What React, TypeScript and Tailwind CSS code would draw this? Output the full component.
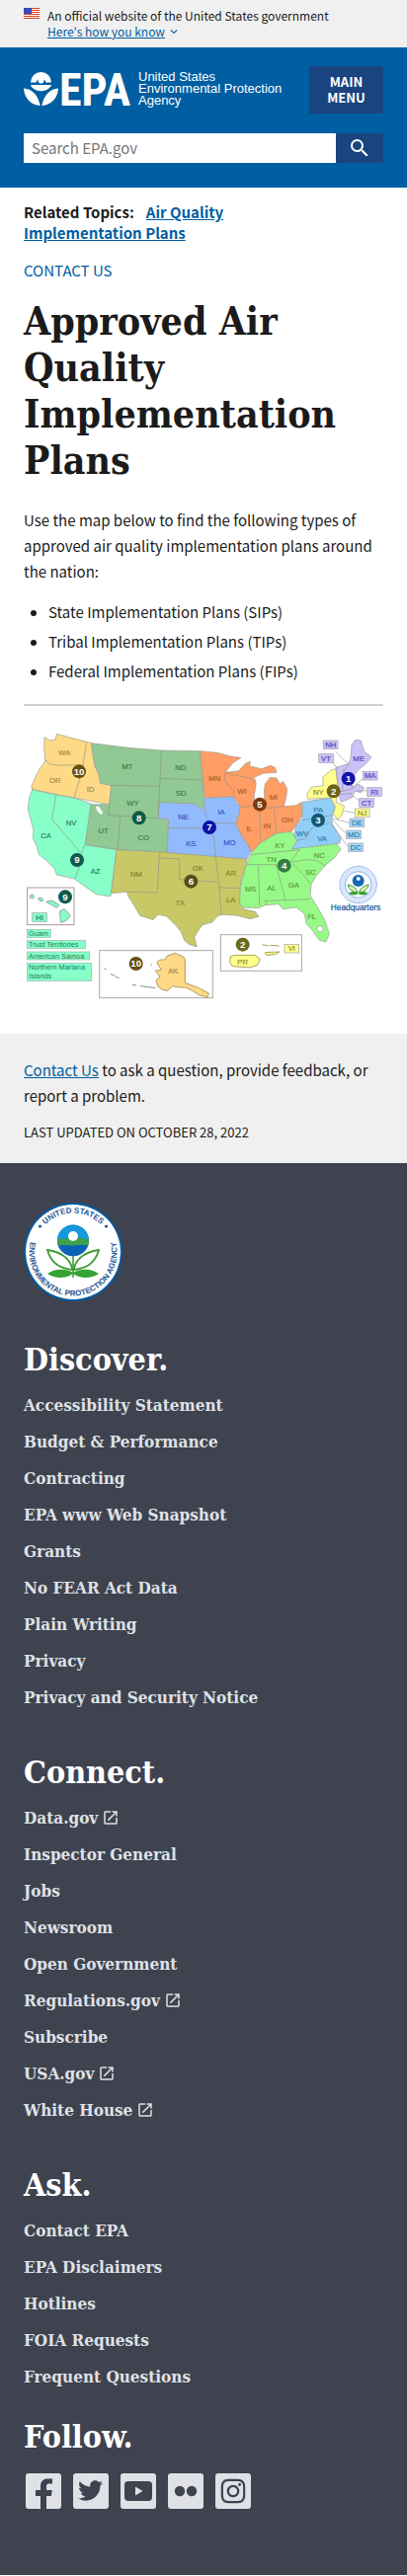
import React from "react";
import { FaTwitter, FaInstagram } from "react-icons/fa";
import { MdSearch, MdExpandMore, MdLaunch } from "react-icons/md";

const sans = "font-['Noto_Sans_CJK_SC',sans-serif]";
const serif = "font-['DejaVu_Serif_Condensed','DejaVu_Serif',serif]";

type FooterLink = { label: string; external?: boolean };

const discover: FooterLink[] = [
  { label: "Accessibility Statement" },
  { label: "Budget & Performance" },
  { label: "Contracting" },
  { label: "EPA www Web Snapshot" },
  { label: "Grants" },
  { label: "No FEAR Act Data" },
  { label: "Plain Writing" },
  { label: "Privacy" },
  { label: "Privacy and Security Notice" },
];

const connect: FooterLink[] = [
  { label: "Data.gov", external: true },
  { label: "Inspector General" },
  { label: "Jobs" },
  { label: "Newsroom" },
  { label: "Open Government" },
  { label: "Regulations.gov", external: true },
  { label: "Subscribe" },
  { label: "USA.gov", external: true },
  { label: "White House", external: true },
];

const ask: FooterLink[] = [
  { label: "Contact EPA" },
  { label: "EPA Disclaimers" },
  { label: "Hotlines" },
  { label: "FOIA Requests" },
  { label: "Frequent Questions" },
];

function Flag() {
  return (
    <svg viewBox="0 0 16 11" className="mt-2 h-[11px] w-4 shrink-0" aria-hidden="true">
      <rect width="16" height="11" fill="#fff" />
      {[0, 2, 4, 6, 8, 10].map((y) => (
        <rect key={y} y={y} width="16" height="1" fill="#db3e1f" />
      ))}
      <rect width="8" height="6" fill="#1e33b1" />
      {[1, 3, 5].map((y) =>
        [1, 3, 5, 7].map((x) => (
          <circle key={`${x}-${y}`} cx={x - (y === 3 ? 0 : 0.4)} cy={y} r="0.4" fill="#fff" />
        )),
      )}
    </svg>
  );
}

function Logo() {
  return (
    <svg viewBox="0 0 114 36" className="h-9 w-[114px] shrink-0 overflow-visible" role="img" aria-label="EPA">
      <g fill="#fff">
        <path d="M7 11.500a10.500 10.500 0 0 1 21 0h-5.500a5.200 5.200 0 0 0-10 0z" />
        <circle cx="17.500" cy="9.500" r="3" />
        <path d="M7 14h21c-.8 3-5 6.200-10.500 6.200s-9.700-3.200-10.500-6.200z" />
        <path d="M0 17.500c8 .5 14.500 6 16.600 17.500C8 34.500.5 28 0 17.500z" />
        <path d="M35 17.500c-8 .5-14.500 6-16.600 17.500C27 34.500 34.500 28 35 17.500z" />
      </g>
      <text x="36" y="35" fill="#fff" fontSize="46" fontWeight="700" fontFamily="'Roboto Condensed','Liberation Sans Narrow',Roboto,sans-serif">
        EPA
      </text>
    </svg>
  );
}

function Seal({ className }: { className: string }) {
  return (
    <svg viewBox="0 0 100 100" className={className} role="img" aria-label="EPA seal">
      <defs>
        <path id="seal-top" d="M10.500 50a39.500 39.500 0 0 1 79 0" />
        <path id="seal-ring" d="M19.800 17.500a44.400 44.400 0 1 0 60.400 0" />
      </defs>
      <circle cx="50" cy="50" r="50" fill="#00599f" />
      <circle cx="50" cy="50" r="48" fill="#fff" />
      <g fill="#1d5792" fontFamily="Liberation Sans" fontSize="8" fontWeight="700">
        <text textAnchor="middle">
          <textPath href="#seal-top" startOffset="50%">
            UNITED STATES
          </textPath>
        </text>
        <text textAnchor="middle">
          <textPath href="#seal-ring" startOffset="50%">
            ENVIRONMENTAL PROTECTION AGENCY
          </textPath>
        </text>
        <circle cx="16.500" cy="24" r="1.600" />
        <circle cx="83.500" cy="24" r="1.600" />
      </g>
      <circle cx="50" cy="38.500" r="16" fill="#0b63b5" />
      <path d="M34.100 37a16 16 0 0 1 31.800 0z" fill="#1499da" />
      <path d="M34 37.500c5-2 10 0 16-1.500s11 0 16 1.500c.2 2.500-.2 4.500-.8 6-6-1.500-10 0-15 0s-10-1.500-15.400.3c-.8-2-1-4-.8-6.300z" fill="#3fa04c" />
      <circle cx="50" cy="34" r="5" fill="#fff" />
      <g fill="#fff" stroke="#3f9c35" strokeWidth="1.800">
        <path d="M49.500 68c-12-1-22-7-25.500-20 13 2 23 8 25.500 20z" />
        <path d="M50.500 68c12-1 22-7 25.500-20-13 2-23 8-25.500 20z" />
      </g>
      <path d="M50 72c-7 5-18 5.500-26 0 7-5.500 19-5.500 26-1 7-4.500 19-4.500 26 1-8 5.500-19 5-26 0z" fill="#35a333" />
      <path d="M50 54v22" stroke="#3f9c35" strokeWidth="1.600" />
    </svg>
  );
}

const regionShapes: { fill: string; d: string }[] = [
  { fill: "#ffda86", d: "M75 38L90 47 108 45 112 28 203 52 218 56 222 90 228 125 240 150 245 178 278 184 272 242 165 222 38 197 36 185 48 158 60 135 78 110 74 70Z" },
  { fill: "#91c893", d: "M218 56L330 70 430 78 548 80 552 135 558 175 560 258 530 240 424 236 420 284 452 288 448 388 298 380 198 365 216 242 272 242 278 184 245 178 240 150 228 125 222 90Z" },
  { fill: "#87ffc9", d: "M38 197L110 213 165 222 216 240 198 365 294 380 276 522 232 515 165 468 112 456 104 436 84 415 58 395 52 370 40 345 42 320 34 290 25 258 28 225Z" },
  { fill: "#c9c866", d: "M294 380L448 388 595 400 690 408 684 440 672 470 668 545 680 560 715 568 726 583 700 590 660 580 615 577 600 582 585 600 555 608 545 622 530 645 538 675 515 668 500 655 490 630 470 605 445 582 420 577 405 593 365 580 345 545 330 522 326 508 278 512Z" },
  { fill: "#91bbfc", d: "M424 236L530 240 560 262 562 222 650 218 658 238 670 250 665 275 655 300 675 340 690 360 702 385 690 408 595 400 448 388 452 288 420 284Z" },
  { fill: "#ff9d64", d: "M548 80L600 85 640 96 672 100 645 118 625 145 665 140 685 118 700 112 698 126 735 134 760 124 775 130 780 145 740 148 712 160 718 178 712 215 712 245 728 248 745 250 742 205 745 180 760 160 780 162 790 180 800 172 812 195 810 215 802 248 840 245 855 235 858 275 840 305 825 325 780 330 730 360 705 388 690 360 675 340 657 300 665 275 670 250 650 218 562 222 554 150Z" },
  { fill: "#97fa87", d: "M705 388L730 360 780 330 825 325 842 352 830 375 960 360 976 378 955 405 930 425 900 460 885 485 882 520 895 540 925 590 940 635 930 660 910 655 885 620 870 605 865 575 840 555 800 560 785 545 745 548 725 557 675 555 668 545 670 490 690 420Z" },
  { fill: "#91cff8", d: "M858 235L945 222 958 248 950 275 948 300 975 345 972 360 825 378 842 355 832 335 840 305 858 285Z" },
  { fill: "#ffff8c", d: "M875 226L872 212 885 190 922 185 920 160 945 138 960 134 968 205 960 235 986 247 978 275 965 288 952 270 958 250 945 222Z" },
  { fill: "#cbc2f7", d: "M960 130L1000 118 1005 100 1008 60 1020 46 1036 48 1046 82 1068 98 1052 118 1030 135 1012 158 1010 192 1028 180 1046 192 1036 206 1018 202 1008 222 975 235 968 200Z" },
];

const borders =
  "M75 106L92 120 125 124 160 122 195 126 M203 52L192 125 182 165 165 222 M278 184L425 187 M430 78L425 187 420 284 M425 163L555 168 M272 242L268 275 420 284 M305 280L298 380 M110 215L98 288 188 392 196 366 M180 390L184 425 168 468 M326 508L418 510 424 388 M424 405L485 408 485 470 600 478 M595 400L604 475 612 577 M606 495L668 497 M452 313L570 315 M560 262L575 298 590 345 595 400 M575 298L655 300 M625 145L622 170 650 200 650 220 M625 145L660 155 700 162 712 178 M670 250L712 246 M728 250L732 330 728 360 M772 250L780 330 M728 255L802 248 M700 395L850 380 825 412 790 425 690 425 M725 430L728 550 M778 425L800 505 806 535 M750 538L745 548 M740 536L880 530 M828 422L860 455 885 485 M825 418L870 410 900 412 928 428 M858 290L948 275 M842 352L870 345 885 315 940 298 M1000 118L985 140 1010 192 M984 135L980 200 M968 205L1010 195 M975 212L1008 208";

const stateLabels: [string, number, number, string][] = [
  ["WA", 136, 92, "#a58a45"], ["OR", 107, 178, "#a58a45"], ["ID", 215, 204, "#a58a45"],
  ["MT", 327, 136, "#4c7a50"], ["ND", 488, 138, "#4c7a50"], ["SD", 490, 215, "#4c7a50"], ["WY", 343, 246, "#4c7a50"], ["UT", 254, 331, "#4c7a50"], ["CO", 376, 350, "#4c7a50"],
  ["CA", 80, 345, "#2f7d62"], ["NV", 156, 306, "#2f7d62"], ["AZ", 230, 452, "#2f7d62"],
  ["NE", 497, 289, "#3a56c8"], ["KS", 520, 368, "#3a56c8"], ["IA", 612, 273, "#3a56c8"], ["MO", 637, 367, "#3a56c8"],
  ["NM", 354, 462, "#87862e"], ["TX", 487, 548, "#87862e"], ["OK", 541, 444, "#87862e"], ["AR", 641, 458, "#87862e"], ["LA", 641, 541, "#87862e"],
  ["MN", 592, 172, "#b0602d"], ["WI", 675, 210, "#b0602d"], ["MI", 771, 228, "#b0602d"], ["IL", 697, 324, "#b0602d"], ["IN", 751, 316, "#b0602d"], ["OH", 812, 298, "#b0602d"],
  ["KY", 790, 374, "#5e9c3d"], ["TN", 764, 418, "#5e9c3d"], ["NC", 910, 404, "#5e9c3d"], ["SC", 883, 455, "#5e9c3d"], ["MS", 701, 508, "#5e9c3d"], ["AL", 765, 504, "#5e9c3d"], ["GA", 832, 496, "#5e9c3d"], ["FL", 887, 592, "#5e9c3d"],
  ["PA", 906, 266, "#3478a8"], ["WV", 858, 339, "#3478a8"], ["VA", 918, 353, "#3478a8"],
  ["NY", 907, 213, "#8c8a30"], ["ME", 1029, 112, "#5646b8"], ["AK", 466, 756, "#a58a45"], ["PR", 677, 728, "#8c8a30"],
];

const boxedLabels: [string, number, number, string, string][] = [
  ["NH", 944, 61, "#cbc2f7", "#5646b8"], ["VT", 930, 102, "#cbc2f7", "#5646b8"], ["MA", 1064, 155, "#cbc2f7", "#5646b8"],
  ["RI", 1077, 204, "#cbc2f7", "#5646b8"], ["CT", 1053, 237, "#cbc2f7", "#5646b8"], ["NJ", 1040, 268, "#ffff8c", "#8c8a30"],
  ["DE", 1024, 298, "#a4d9f8", "#3478a8"], ["MD", 1014, 334, "#a4d9f8", "#3478a8"], ["DC", 1020, 373, "#a4d9f8", "#3478a8"],
  ["VI", 826, 680, "#ffff8c", "#8c8a30"], ["HI", 60, 585, "#87ffc9", "#2f7d62"],
];

const regionDots: [string, number, number, string][] = [
  ["10", 180, 142, "#67500f"], ["8", 362, 283, "#0d5a42"], ["9", 174, 411, "#0f5a4c"], ["7", 576, 312, "#0b12a8"],
  ["5", 729, 242, "#7a3b12"], ["6", 520, 476, "#54501a"], ["4", 803, 428, "#347c40"], ["3", 906, 290, "#0e5a78"],
  ["2", 953, 202, "#6b6214"], ["1", 998, 164, "#160fa8"], ["9", 138, 523, "#0f5a4c"], ["10", 353, 726, "#67500f"], ["2", 677, 668, "#6b6a1c"],
];

const territories: [string, number, number, number][] = [
  ["Guam", 622, 72, 24],
  ["Trust Territories", 656, 178, 24],
  ["American Samoa", 690, 190, 24],
];

function RegionMap() {
  return (
    <svg viewBox="12 0 1092 855" className="block w-full" role="img" aria-label="Map of EPA regions" fontFamily="Liberation Sans">
      <g stroke="#9a9c94" strokeWidth="2" strokeLinejoin="round">
        {regionShapes.map((r) => (
          <path key={r.fill} d={r.d} fill={r.fill} />
        ))}
        <path d={borders} fill="none" stroke="#8d9488" />
        <path d="M230 248l10 0 12 18-4 8-12-10z" fill="#fff" stroke="none" />
        <circle cx="912" cy="620" r="9" fill="#fff" />
        <path d="M960 82L996 118 M950 112L965 135 M1040 165L1010 192 M1055 200L1025 202 M1032 232L1005 212 M1018 268L985 262 M1002 298L952 285 M995 334L950 290 M996 370L945 300" fill="none" />
      </g>

      <g fill="#fff" stroke="#a8979d" strokeWidth="3">
        <rect x="23" y="495" width="142" height="113" />
        <rect x="242" y="686" width="344" height="144" stroke="#aaa" />
        <rect x="610" y="638" width="246" height="110" stroke="#aaa" />
      </g>
      <g fill="#87ffc9" stroke="#8ba89c" strokeWidth="3">
        <path d="M122 566l14-6 18 20-14 16-16 5z" />
        <circle cx="37" cy="522" r="6" />
        <path d="M56 528l10-2 6 8-10 2z M80 538l18-4 22 14-8 8-14-8z" />
      </g>
      <g fill="#ffda86" stroke="#b09a66" strokeWidth="3">
        <path d="M416 722l10-8 14 0 8-12 24-8 26 12 4 8 0 70 20 8 22 8 30 16-4 12-24-6-22-14-22-10-20 0-18-4-14 14-16-2-14-10-6-20 12-10-14-18 18-4-8-12z" />
        <path d="M256 740l6 4M276 758l12 4M288 764l14 6M342 790l12 2M366 794l46 6M398 728l4 2" fill="none" stroke="#8e8e8e" />
      </g>
      <g fill="#ffff8c" stroke="#a8a560" strokeWidth="3">
        <path d="M640 704l14-4 60 0 16 12-8 18-24 8-52-4-8-12z" />
        <path d="M745 692l44-2-14 8-26 2z M736 668l20 4M760 670l28 2" />
      </g>

      {boxedLabels.map(([label, x, y, fill]) => (
        <rect key={label} x={x - 22} y={y - 13} width="44" height="26" fill={fill} stroke="#a3a0b0" strokeWidth="2" />
      ))}
      {boxedLabels.map(([label, x, y, , ink]) => (
        <text key={label} x={x} y={y + 8} fontSize="23" textAnchor="middle" fill={ink} stroke={ink} strokeWidth="0.600">
          {label}
        </text>
      ))}
      {stateLabels.map(([label, x, y, ink]) => (
        <text key={label} x={x} y={y} fontSize="23" textAnchor="middle" fill={ink} stroke={ink} strokeWidth="0.600">
          {label}
        </text>
      ))}
      {regionDots.map(([label, x, y, fill], i) => (
        <g key={i}>
          <circle cx={x} cy={y} r="21" fill={fill} />
          <text x={x} y={y + 10} fontSize="29" fontWeight="700" textAnchor="middle" fill="#fff">
            {label}
          </text>
        </g>
      ))}
      <g fontSize="22">
        {territories.map(([label, y, w, h]) => (
          <g key={label}>
            <rect x="22" y={y} width={w} height={h} fill="#87ffc9" stroke="#93b8a9" strokeWidth="2" />
            <text x="27" y={y + 20} fill="#1f7a5e">
              {label}
            </text>
          </g>
        ))}
        <rect x="22" y="724" width="196" height="54" fill="#87ffc9" stroke="#93b8a9" strokeWidth="2" />
        <text x="27" y="745" fill="#1f7a5e">
          Northern Mariana
        </text>
        <text x="27" y="772" fill="#1f7a5e">
          Islands
        </text>
      </g>

      <g>
        <circle cx="1028" cy="486" r="56" fill="#dbe7fb" stroke="#6c9be8" strokeWidth="3" strokeDasharray="5 3" />
        <circle cx="1028" cy="486" r="40" fill="#fff" stroke="#8fb2ec" strokeWidth="3" />
        <circle cx="1028" cy="474" r="18" fill="#1766b8" />
        <circle cx="1028" cy="468" r="6" fill="#fff" />
        <path d="M1026 510q-24-2-30-24 24 4 30 24zM1030 510q24-2 30-24-24 4-30 24z" fill="#d9f2b8" stroke="#3f9c35" strokeWidth="3" />
        <path d="M998 512q15-10 30 0 15-10 30 0-15 10-30 2-15 8-30-2z" fill="#35a333" />
        <text x="1020" y="564" fontSize="25" textAnchor="middle" fill="#14569c" stroke="#14569c" strokeWidth="0.600">
          Headquarters
        </text>
      </g>
    </svg>
  );
}

function FooterSection({ title, links }: { title: string; links: FooterLink[] }) {
  return (
    <section>
      <h2 className={`${serif} mb-[7px] text-[32px] leading-10 font-bold text-white`}>{title}</h2>
      <ul>
        {links.map((l) => (
          <li key={l.label}>
            <a href="#" className={`${serif} flex h-[37px] items-center gap-1 text-[17px] leading-5 font-bold text-[#dfe1e6]`}>
              {l.label}
              {l.external && <MdLaunch className="size-[18px]" aria-hidden="true" />}
            </a>
          </li>
        ))}
      </ul>
    </section>
  );
}

function SocialLink({ label, children }: { label: string; children: React.ReactNode }) {
  return (
    <a href="#" aria-label={label} className="block size-9">
      <svg viewBox="0 0 36 36" className="size-9 text-[#3f434f]">
        <rect width="36" height="36" rx="3" fill="#dfe1e6" />
        {children}
      </svg>
    </a>
  );
}

export default function App() {
  return (
    <div className={`${sans} min-h-screen bg-white text-[#1b1b1b]`}>
      <section className="flex h-12 gap-2 bg-[#f0f0f0] px-6" aria-label="Official government website">
        <Flag />
        <div className="pt-2 text-[12px] leading-4">
          <p>An official website of the United States government</p>
          <button type="button" className="flex items-center gap-0.5 text-[#005ea2]">
            <span className="underline">Here's how you know</span>
            <MdExpandMore className="size-[14px]" aria-hidden="true" />
          </button>
        </div>
      </section>

      <header className="bg-[#005ea2] px-6 pt-[19px] pb-[25px]">
        <div className="flex items-start justify-between">
          <a href="#" className="mt-[5px] flex items-center gap-0.5 text-white">
            <Logo />
            <span className="font-['Liberation_Sans',sans-serif] text-[13px] leading-3">
              United States
              <br />
              Environmental Protection
              <br />
              Agency
            </span>
          </a>
          <button type="button" className="w-[75px] bg-[#1a4480] py-2 text-[13px] leading-4 font-bold text-white">
            MAIN
            <br />
            MENU
          </button>
        </div>
        <form className="mt-5 flex h-[30px]" role="search" onSubmit={(e) => e.preventDefault()}>
          <input
            type="search"
            aria-label="Search"
            placeholder="Search EPA.gov"
            className="min-w-0 flex-1 bg-white px-2 text-[15px] leading-5 placeholder:text-[#757575]"
          />
          <button type="submit" aria-label="Search" className="flex w-12 items-center justify-center bg-[#1a4480] text-white">
            <MdSearch className="size-6" />
          </button>
        </form>
      </header>

      <main className="px-6 pt-3.5">
        <p className="max-w-60 text-[15px] leading-[21px] font-bold">
          Related Topics:
          <a href="#" className="ml-3 text-[#005ea2] underline">
            Air Quality Implementation Plans
          </a>
        </p>
        <a href="#" className="mt-[17px] block text-[15px] leading-[21px] text-[#005ea2]">
          CONTACT US
        </a>
        <h1 className={`${serif} mt-[18px] text-[39px] leading-[47px] font-bold`}>Approved Air Quality Implementation Plans</h1>
        <p className="mt-6 text-[15px] leading-[26px]">
          Use the map below to find the following types of approved air quality implementation plans around the nation:
        </p>
        <ul className="mt-[15px] list-disc space-y-1 pl-[25px] text-[15px] leading-[26px]">
          <li>State Implementation Plans (SIPs)</li>
          <li>Tribal Implementation Plans (TIPs)</li>
          <li>Federal Implementation Plans (FIPs)</li>
        </ul>
        <hr className="mt-5 mb-[19px] border-t-2 border-[#cfd1d1]" />
        <RegionMap />
      </main>

      <section className="mt-7 bg-[#f0f0f0] px-6 pt-6 pb-[21px]">
        <p className="text-[15px] leading-[26px]">
          <a href="#" className="text-[#005ea2] underline">
            Contact Us
          </a>{" "}
          to ask a question, provide feedback, or report a problem.
        </p>
        <p className="mt-3.5 text-[13px] leading-5">LAST UPDATED ON OCTOBER 28, 2022</p>
      </section>

      <footer className="bg-[#3f434f] px-6 pt-10 pb-[67px]">
        <Seal className="block size-[100px]" />
        <div className="mt-[39px] flex flex-col gap-[38px]">
          <FooterSection title="Discover." links={discover} />
          <FooterSection title="Connect." links={connect} />
          <FooterSection title="Ask." links={ask} />
        </div>
        <h2 className={`${serif} mt-[23px] text-[32px] leading-10 font-bold text-white`}>Follow.</h2>
        <div className="mt-[17px] ml-0.5 flex gap-3">
          <SocialLink label="Facebook">
            <path d="M15 36V23h-5v-6h5v-4c0-5 3-7.500 7.500-7.500H27v5h-3c-2.500 0-3 1.200-3 3V17h5.700l-.8 6H21v13z" fill="currentColor" />
          </SocialLink>
          <SocialLink label="Twitter">
            <FaTwitter x="5" y="5" size={25} />
          </SocialLink>
          <SocialLink label="YouTube">
            <rect x="4" y="8" width="28" height="20" rx="4" fill="currentColor" />
            <path d="M15 13.500v9l7.500-4.500z" fill="#dfe1e6" />
          </SocialLink>
          <SocialLink label="Flickr">
            <circle cx="12" cy="18" r="5.200" fill="currentColor" />
            <circle cx="24" cy="18" r="5.200" fill="currentColor" />
          </SocialLink>
          <SocialLink label="Instagram">
            <FaInstagram x="4" y="4" size={28} />
          </SocialLink>
        </div>
      </footer>
    </div>
  );
}
